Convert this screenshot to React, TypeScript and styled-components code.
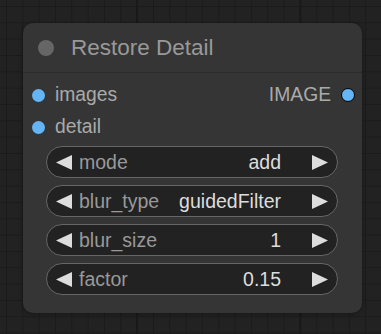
import React from "react";
import styled, { createGlobalStyle } from "styled-components";

const GlobalStyle = createGlobalStyle`
  html, body {
    margin: 0;
    padding: 0;
    height: 100%;
  }
  body {
    font-family: "Liberation Sans", Arial, sans-serif;
    background-color: #222222;
    background-image:
      linear-gradient(to right, #191919 2px, transparent 2px),
      linear-gradient(to right, #1b1b1b 1px, transparent 1px),
      linear-gradient(to bottom, #1b1b1b 1px, transparent 1px);
    background-size: 163.3px 100%, 16.33px 100%, 100% 16.33px;
    background-position: 136px 0, 6px 0, 0 6px;
    overflow: hidden;
  }
`;

const Node = styled.div`
  margin: 23px 0 0 23px;
  width: 339px;
  height: 290px;
  background: #353535;
  border-radius: 10px;
  box-shadow: 0 1px 4px rgba(0, 0, 0, 0.35);
  display: flex;
  flex-direction: column;
`;

const TitleBar = styled.div`
  height: 49px;
  border-bottom: 1px solid #2b2b2b;
  display: flex;
  align-items: center;
  padding-left: 15px;
  gap: 17px;
`;

const TitleDot = styled.div`
  width: 16px;
  height: 16px;
  border-radius: 50%;
  background: #666666;
`;

const Title = styled.div`
  font-size: 22.5px;
  color: #999999;
`;

const Body = styled.div`
  padding-top: 6px;
  display: flex;
  flex-direction: column;
`;

const SlotRow = styled.div`
  height: 32px;
  display: flex;
  align-items: center;
  justify-content: space-between;
  padding: 0 7px 0 9px;
`;

const Slot = styled.div`
  display: flex;
  align-items: center;
  gap: 10px;
  font-size: 19.3px;
  color: #aaaaaa;
`;

const SlotDot = styled.div<{ $out?: boolean }>`
  width: ${(p) => (p.$out ? "14px" : "13px")};
  height: ${(p) => (p.$out ? "14px" : "13px")};
  border-radius: 50%;
  background: #64b5f6;
  box-sizing: border-box;
  border: ${(p) => (p.$out ? "1.5px solid #000" : "none")};
`;

const Widgets = styled.div`
  margin-top: 3px;
  padding: 0 24px 0 23px;
  display: flex;
  flex-direction: column;
  gap: 7px;
`;

const Widget = styled.div`
  height: 32px;
  box-sizing: border-box;
  border: 1px solid #666666;
  border-radius: 16px;
  background: #222222;
  display: flex;
  align-items: center;
  padding: 0 9px;
  font-size: 19.5px;
`;

const Label = styled.span`
  color: #999999;
  margin-left: 7px;
  flex: 1;
  white-space: nowrap;
`;

const Value = styled.span`
  color: #dddddd;
  margin-right: 31px;
  white-space: nowrap;
`;

const Arrow: React.FC<{ dir: "left" | "right" }> = ({ dir }) => (
  <svg width="16" height="15" viewBox="0 0 16 15">
    <polygon
      points={dir === "left" ? "16,0 16,15 0,7.5" : "0,0 0,15 16,7.5"}
      fill="#dddddd"
    />
  </svg>
);

const widgets = [
  { label: "mode", value: "add" },
  { label: "blur_type", value: "guidedFilter" },
  { label: "blur_size", value: "1" },
  { label: "factor", value: "0.15" },
];

export default function App() {
  return (
    <>
      <GlobalStyle />
      <Node>
        <TitleBar>
          <TitleDot />
          <Title>Restore Detail</Title>
        </TitleBar>
        <Body>
          <SlotRow>
            <Slot>
              <SlotDot />
              images
            </Slot>
            <Slot>
              IMAGE
              <SlotDot $out />
            </Slot>
          </SlotRow>
          <SlotRow>
            <Slot>
              <SlotDot />
              detail
            </Slot>
          </SlotRow>
          <Widgets>
            {widgets.map((w) => (
              <Widget key={w.label}>
                <Arrow dir="left" />
                <Label>{w.label}</Label>
                <Value>{w.value}</Value>
                <Arrow dir="right" />
              </Widget>
            ))}
          </Widgets>
        </Body>
      </Node>
    </>
  );
}
